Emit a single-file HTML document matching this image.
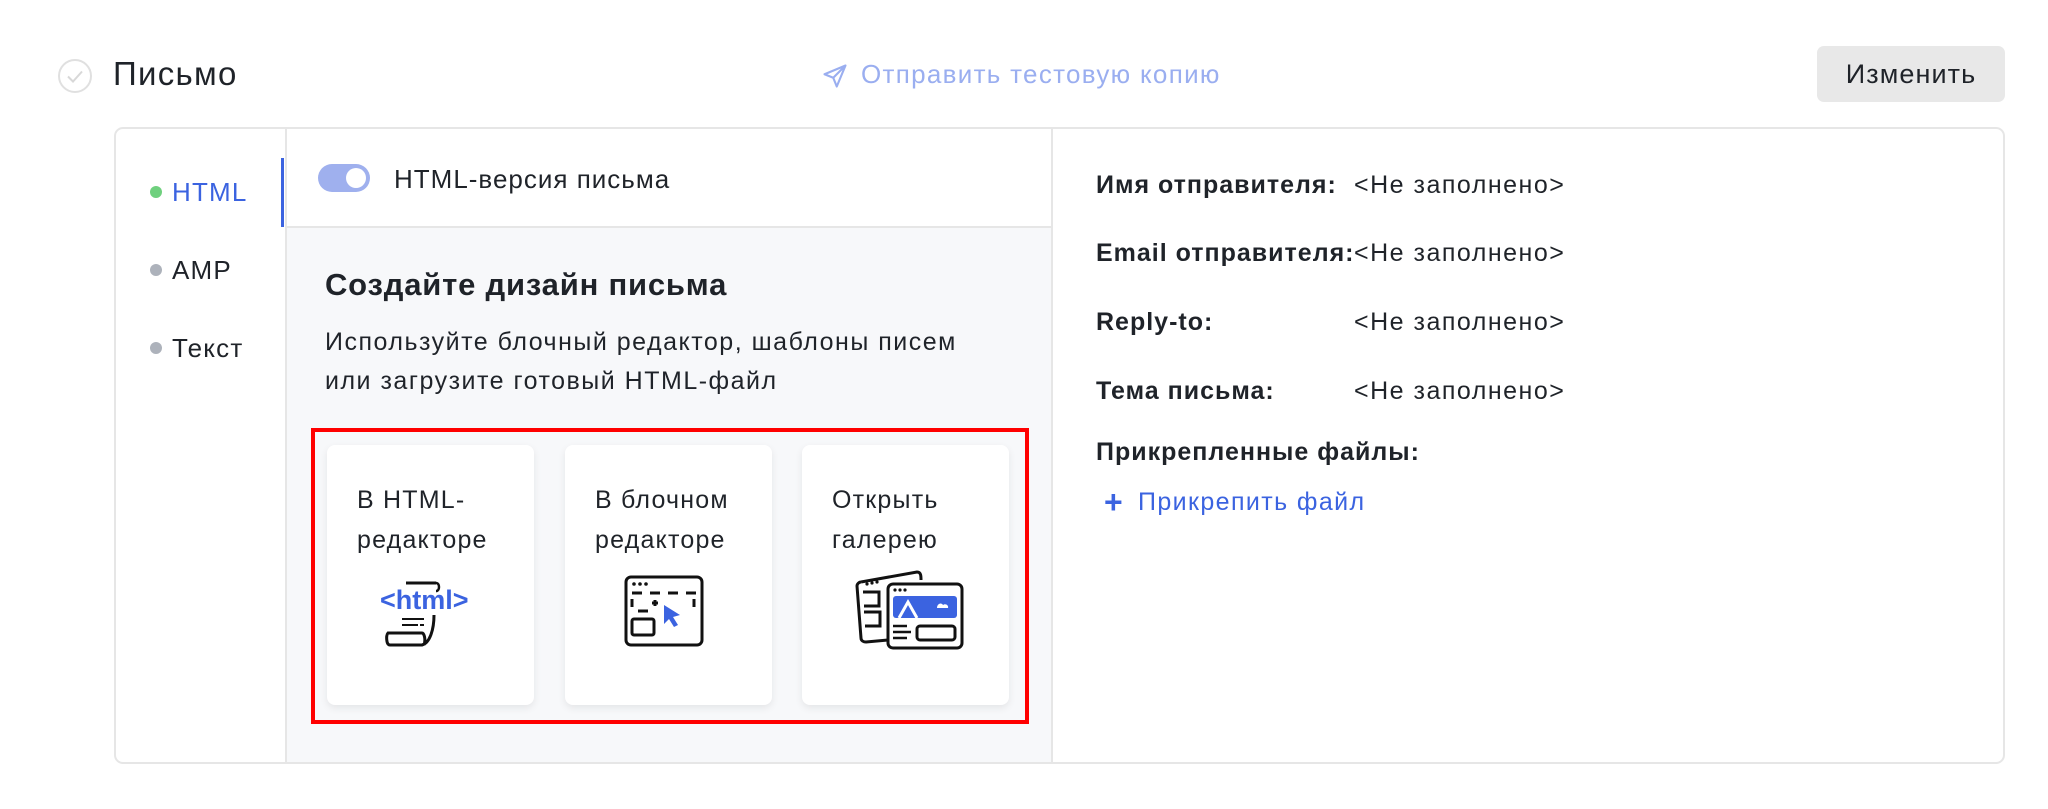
<!DOCTYPE html>
<html><head><meta charset="utf-8"><style>
*{margin:0;padding:0;box-sizing:border-box}
body{width:2048px;height:809px;background:#fff;font-family:"Liberation Sans","Noto Sans CJK SC",sans-serif;color:#1f2329;position:relative;overflow:hidden}
.a{position:absolute;white-space:nowrap}
.lb{font-size:25px;font-weight:bold;letter-spacing:1px}
.vl{font-size:25px;letter-spacing:1.5px}
.ct{font-size:25px;line-height:40px;letter-spacing:1.2px}
.nv{font-size:26px;letter-spacing:1.2px}
</style></head><body>
<svg class="a" style="left:57px;top:58px" width="36" height="36" viewBox="0 0 36 36"><circle cx="18" cy="18" r="16" fill="none" stroke="#e0e0e0" stroke-width="2"/><path d="M11 18.5l5 5 9-10" fill="none" stroke="#d8d8d8" stroke-width="2"/></svg>
<div class="a" style="left:113px;top:55px;font-size:33px;letter-spacing:1.3px">Письмо</div>
<svg class="a" style="left:821px;top:62px" width="28" height="28" viewBox="0 0 24 24"><path d="M21 3L3 10.5l7.5 3L13.5 21z M10.5 13.5L21 3" fill="none" stroke="#9aaef0" stroke-width="1.8" stroke-linejoin="round"/></svg>
<div class="a" style="left:861px;top:59px;font-size:26px;letter-spacing:1.3px;color:#9aaef0">Отправить тестовую копию</div>
<div class="a" style="left:1817px;top:46px;width:188px;height:56px;background:#e8e8e8;border-radius:7px;font-size:27px;letter-spacing:1.1px;line-height:56px;text-align:center">Изменить</div>

<div class="a" style="left:114px;top:127px;width:1891px;height:637px;border:2px solid #e6e6e6;border-radius:9px"></div>
<div class="a" style="left:285px;top:129px;width:2px;height:633px;background:#e6e6e6"></div>
<div class="a" style="left:287px;top:227px;width:765px;height:535px;background:#f7f8fa"></div>
<div class="a" style="left:287px;top:226px;width:765px;height:2px;background:#e6e6e6"></div>
<div class="a" style="left:1051px;top:129px;width:2px;height:633px;background:#e6e6e6"></div>
<div class="a" style="left:281px;top:158px;width:3px;height:69px;background:#3b63e0"></div>

<div class="a" style="left:150px;top:186px;width:12px;height:12px;border-radius:50%;background:#6fd07e"></div>
<div class="a nv" style="left:172px;top:177px;color:#3b63e0">HTML</div>
<div class="a" style="left:150px;top:264px;width:12px;height:12px;border-radius:50%;background:#adb2bb"></div>
<div class="a nv" style="left:172px;top:255px">AMP</div>
<div class="a" style="left:150px;top:342px;width:12px;height:12px;border-radius:50%;background:#adb2bb"></div>
<div class="a nv" style="left:172px;top:333px">Текст</div>

<div class="a" style="left:318px;top:164px;width:52px;height:28px;border-radius:14px;background:#9fb0ee"></div>
<div class="a" style="left:346px;top:168px;width:20px;height:20px;border-radius:50%;background:#fff"></div>
<div class="a" style="left:394px;top:164px;font-size:26px;letter-spacing:1px">HTML-версия письма</div>

<div class="a" style="left:325px;top:267px;font-size:31px;letter-spacing:0.8px;font-weight:bold">Создайте дизайн письма</div>
<div class="a" style="left:325px;top:323px;font-size:25px;letter-spacing:1.5px;line-height:39px">Используйте блочный редактор, шаблоны писем<br>или загрузите готовый HTML-файл</div>

<div class="a" style="left:311px;top:428px;width:718px;height:296px;border:4px solid #ff0000"></div>
<div class="a" style="left:327px;top:445px;width:207px;height:260px;background:#fff;border-radius:8px;box-shadow:0 3px 8px rgba(0,0,0,.08)"></div>
<div class="a" style="left:565px;top:445px;width:207px;height:260px;background:#fff;border-radius:8px;box-shadow:0 3px 8px rgba(0,0,0,.08)"></div>
<div class="a" style="left:802px;top:445px;width:207px;height:260px;background:#fff;border-radius:8px;box-shadow:0 3px 8px rgba(0,0,0,.08)"></div>
<div class="a ct" style="left:357px;top:480px">В HTML-<br>редакторе</div>
<div class="a ct" style="left:595px;top:480px">В блочном<br>редакторе</div>
<div class="a ct" style="left:832px;top:480px">Открыть<br>галерею</div>

<svg class="a" style="left:378px;top:577px" width="104" height="72" viewBox="0 0 104 72">
<path d="M28 6h30" stroke="#111" stroke-width="3" fill="none"/>
<path d="M58 6c4 0 4 8 0 8" stroke="#111" stroke-width="2.5" fill="none"/>
<text x="2" y="32" font-family="Liberation Sans,sans-serif" font-weight="bold" font-size="27" fill="#3b63e0">&lt;html&gt;</text>
<path d="M56 38c0 14-4 28-12 30H12c-4 0-4-10-2-12h34c2 0 4 6 2 12" stroke="#111" stroke-width="3" fill="none"/>
<path d="M24 42h22M24 48h16M42 48h4" stroke="#111" stroke-width="2" fill="none"/>
</svg>
<svg class="a" style="left:624px;top:575px" width="90" height="72" viewBox="0 0 90 72">
<rect x="2" y="2" width="76" height="68" rx="5" fill="none" stroke="#111" stroke-width="3"/>
<circle cx="10" cy="9" r="1.8" fill="#111"/><circle cx="16" cy="9" r="1.8" fill="#111"/><circle cx="22" cy="9" r="1.8" fill="#111"/>
<path d="M8 18h10M26 18h10M44 18h10M62 18h10M8 24v8M70 24v8M14 36h10M28 28h6M31 25v6" stroke="#111" stroke-width="3" fill="none"/>
<rect x="8" y="44" width="22" height="16" rx="2" fill="none" stroke="#111" stroke-width="3"/>
<path d="M40 30l16 10-7 2 5 8-4 2-5-8-5 5z" fill="#3b63e0"/>
</svg>
<svg class="a" style="left:855px;top:568px" width="110" height="82" viewBox="0 0 110 82">
<path d="M6 14l56-10c4 0 4 4 4 8M6 14c-2 0-4 2-4 4l4 52c0 3 3 4 5 4l22-2" fill="none" stroke="#111" stroke-width="3"/>
<circle cx="12" cy="16" r="1.6" fill="#111"/><circle cx="17" cy="15" r="1.6" fill="#111"/><circle cx="22" cy="14" r="1.6" fill="#111"/>
<path d="M8 24h16v14H9M9 44h16v14H10" fill="none" stroke="#111" stroke-width="3"/>
<rect x="33" y="16" width="74" height="64" rx="5" fill="#fff" stroke="#111" stroke-width="3"/>
<circle cx="40" cy="22" r="1.6" fill="#111"/><circle cx="45" cy="22" r="1.6" fill="#111"/><circle cx="50" cy="22" r="1.6" fill="#111"/>
<rect x="38" y="28" width="64" height="22" rx="3" fill="#3b63e0"/>
<path d="M44 50l9-16 9 16" fill="none" stroke="#fff" stroke-width="3"/>
<path d="M82 40c0-4 4-6 6-3 2-2 6 0 5 3z" fill="#fff"/>
<path d="M38 58h14M38 64h18M38 70h14" stroke="#111" stroke-width="2.5"/>
<rect x="62" y="58" width="38" height="14" rx="3" fill="none" stroke="#111" stroke-width="3"/>
</svg>

<div class="a lb" style="left:1096px;top:171px">Имя отправителя:</div>
<div class="a vl" style="left:1354px;top:171px">&lt;Не заполнено&gt;</div>
<div class="a lb" style="left:1096px;top:239px">Email отправителя:</div>
<div class="a vl" style="left:1354px;top:239px">&lt;Не заполнено&gt;</div>
<div class="a lb" style="left:1096px;top:308px">Reply-to:</div>
<div class="a vl" style="left:1354px;top:308px">&lt;Не заполнено&gt;</div>
<div class="a lb" style="left:1096px;top:377px">Тема письма:</div>
<div class="a vl" style="left:1354px;top:377px">&lt;Не заполнено&gt;</div>
<div class="a lb" style="left:1096px;top:438px">Прикрепленные файлы:</div>
<div class="a" style="left:1104px;top:484px;font-size:32px;color:#3b63e0;font-weight:bold">+</div>
<div class="a" style="left:1138px;top:488px;font-size:25px;letter-spacing:1.4px;color:#3b63e0">Прикрепить файл</div>
</body></html>
